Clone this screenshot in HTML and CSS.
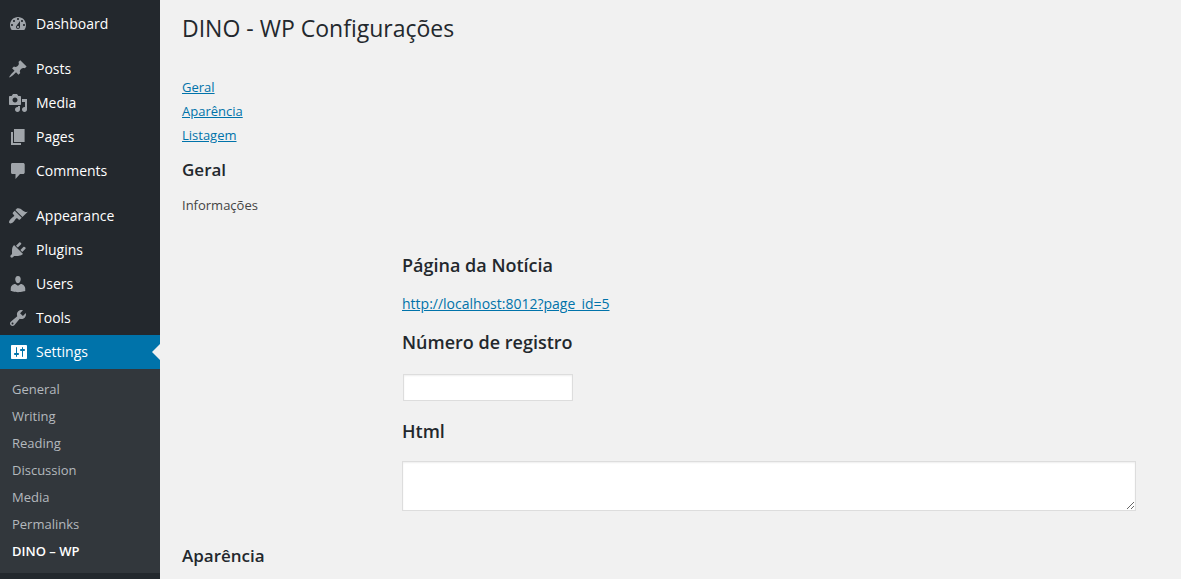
FILE: index.html
```html
<!DOCTYPE html>
<html lang="pt-BR">
<head>
<meta charset="utf-8">
<title>DINO - WP Configurações</title>
<link rel="stylesheet" href="styles.css">
</head>
<body>
<div class="layout">
  <nav class="sidebar" aria-label="Menu">
    <ul class="menu">
      <li><a class="menu-link" href="#"><svg class="icon" viewBox="0 0 20 20" aria-hidden="true"><path d="M3.76 16h12.48c1.1-1.37 1.76-3.11 1.76-5 0-4.42-3.58-8-8-8s-8 3.58-8 8c0 1.89.66 3.63 1.76 5zM10 4c.55 0 1 .45 1 1s-.45 1-1 1-1-.45-1-1 .45-1 1-1zM6 6c.55 0 1 .45 1 1s-.45 1-1 1-1-.45-1-1 .45-1 1-1zm8 0c.55 0 1 .45 1 1s-.45 1-1 1-1-.45-1-1 .45-1 1-1zm-5.37 5.55L12 7v6c0 1.1-.9 2-2 2s-2-.9-2-2c0-.57.24-1.08.63-1.45zM4 10c.55 0 1 .45 1 1s-.45 1-1 1-1-.45-1-1 .45-1 1-1zm12 0c.55 0 1 .45 1 1s-.45 1-1 1-1-.45-1-1 .45-1 1-1zm-5 3c0-.55-.45-1-1-1s-1 .45-1 1 .45 1 1 1 1-.45 1-1z"/></svg>Dashboard</a></li>
    </ul>
    <ul class="menu">
      <li><a class="menu-link" href="#"><svg class="icon" viewBox="0 0 20 20" aria-hidden="true"><path d="M10.44 3.02l1.82-1.82 6.36 6.35-1.83 1.82c-1.05-.68-2.48-.57-3.41.36l-.75.75c-.92.93-1.04 2.35-.35 3.41l-1.83 1.82-2.41-2.41-2.8 2.79c-.42.42-3.38 2.71-3.8 2.29s1.86-3.39 2.28-3.81l2.79-2.79L4.1 9.36l1.83-1.82c1.05.69 2.48.57 3.4-.36l.75-.75c.93-.92 1.05-2.35.36-3.41z"/></svg>Posts</a></li>
      <li><a class="menu-link" href="#"><svg class="icon" viewBox="0 0 20 20" aria-hidden="true"><path d="M13 11V4c0-.55-.45-1-1-1h-1.67L9 1H5L3.67 3H2c-.55 0-1 .45-1 1v7c0 .55.45 1 1 1h10c.55 0 1-.45 1-1zM7 4.5c1.38 0 2.5 1.12 2.5 2.5S8.38 9.5 7 9.5 4.5 8.38 4.5 7 5.62 4.5 7 4.5zM14 6h5v10.5c0 1.38-1.12 2.5-2.5 2.5S14 17.88 14 16.5s1.12-2.5 2.5-2.5c.17 0 .34.02.5.05V9h-3V6zm-4 8.05V13h2v3.5c0 1.38-1.12 2.5-2.5 2.5S7 17.88 7 16.5 8.12 14 9.5 14c.17 0 .34.02.5.05z"/></svg>Media</a></li>
      <li><a class="menu-link" href="#"><svg class="icon" viewBox="0 0 20 20" aria-hidden="true"><path d="M6 15V2h10.600v13H6zm-1 1h8v2H3V5h2v11z"/></svg>Pages</a></li>
      <li><a class="menu-link" href="#"><svg class="icon" viewBox="0 0 20 20" aria-hidden="true"><path d="M4.500 2h10.500c1 0 1.700.6 1.700 1.500v8c0 .9-.7 1.500-1.700 1.500h-3l-4.500 5v-5H4.500C3.500 13 3 12.400 3 11.500v-8C3 2.600 3.500 2 4.500 2z"/></svg>Comments</a></li>
    </ul>
    <ul class="menu">
      <li><a class="menu-link" href="#"><svg class="icon" viewBox="0 0 20 20" aria-hidden="true"><path d="M14.480 11.060L7.410 3.990l1.500-1.500c.5-.56 2.300-.47 3.510.32 1.210.8 1.430 1.280 2.910 2.100 1.180.64 2.450 1.260 4.450.85zm-.71.71L6.700 4.700 4.930 6.470c-.39.39-.39 1.020 0 1.410l1.060 1.060c.39.39.39 1.030 0 1.420-.6.6-1.430 1.110-2.210 1.690-.35.26-.7.53-1.010.84C1.430 14.230.4 16.080 1.400 17.070c.99 1 2.840-.03 4.180-1.360.31-.31.58-.66.85-1.020.57-.78 1.080-1.610 1.690-2.210.39-.39 1.020-.39 1.410 0l1.060 1.060c.39.39 1.020.39 1.410 0z"/></svg>Appearance</a></li>
      <li><a class="menu-link" href="#"><svg class="icon" viewBox="0 0 20 20" aria-hidden="true"><path d="M13.110 4.360L9.870 7.600 8 5.730l3.240-3.240c.35-.34 1.050-.2 1.560.32.52.51.66 1.210.31 1.550zm-8 1.770l.91-1.120 9.010 9.010-1.190.84c-.71.71-2.630 1.160-3.820 1.160H6.140L4.900 17.260c-.59.59-1.540.59-2.120 0-.59-.58-.59-1.530 0-2.120l1.240-1.240v-3.880c0-1.130.4-3.190 1.090-3.890zm7.260 3.970l3.240-3.240c.34-.35 1.040-.21 1.550.31.52.51.66 1.210.31 1.550l-3.240 3.250z"/></svg>Plugins</a></li>
      <li><a class="menu-link" href="#"><svg class="icon" viewBox="0 0 20 20" aria-hidden="true"><path d="M10 9.250c-2.270 0-2.730-3.440-2.730-3.440C7 4.020 7.820 2 9.970 2c2.160 0 2.980 2.020 2.710 3.810 0 0-.41 3.440-2.680 3.440zm0 2.570L12.720 10c2.390 0 4.520 2.330 4.520 4.530v2.490s-3.650 1.130-7.240 1.130c-3.650 0-7.240-1.130-7.240-1.130v-2.490c0-2.250 1.940-4.480 4.470-4.480z"/></svg>Users</a></li>
      <li><a class="menu-link" href="#"><svg class="icon" viewBox="0 0 20 20" aria-hidden="true"><path d="M16.680 9.770c-1.340 1.340-3.300 1.670-4.950.99l-5.410 6.520c-.99.99-2.590.99-3.580 0s-.99-2.590 0-3.570l6.520-5.420c-.68-1.650-.35-3.610.99-4.950 1.280-1.280 3.120-1.620 4.720-1.060l-2.890 2.890 2.820 2.820 2.860-2.870c.53 1.580.18 3.390-1.080 4.650zM3.810 16.210c.4.39 1.040.39 1.430 0 .4-.4.4-1.040 0-1.430-.39-.4-1.030-.4-1.430 0-.39.39-.39 1.030 0 1.430z"/></svg>Tools</a></li>
      <li>
        <a class="menu-link current" href="#"><svg class="icon" viewBox="-1 0 20 20" aria-hidden="true"><path d="M18 16V4c0-.55-.45-1-1-1H3c-.55 0-1 .45-1 1v12c0 .55.45 1 1 1h14c.55 0 1-.45 1-1zM8 11h1c.55 0 1 .45 1 1s-.45 1-1 1H8v1.500c0 .28-.22.5-.5.5s-.5-.22-.5-.5V13H6c-.55 0-1-.45-1-1s.45-1 1-1h1V5.500c0-.28.22-.5.5-.5s.5.22.5.5V11zm5-2h-1c-.55 0-1-.45-1-1s.45-1 1-1h1V5.500c0-.28.22-.5.5-.5s.5.22.5.5V7h1c.55 0 1 .45 1 1s-.45 1-1 1h-1v5.500c0 .28-.22.5-.5.5s-.5-.22-.5-.5V9z"/></svg>Settings</a>
        <ul class="submenu">
          <li><a href="#">General</a></li>
          <li><a href="#">Writing</a></li>
          <li><a href="#">Reading</a></li>
          <li><a href="#">Discussion</a></li>
          <li><a href="#">Media</a></li>
          <li><a href="#">Permalinks</a></li>
          <li><a class="active" href="#">DINO – WP</a></li>
        </ul>
      </li>
    </ul>
  </nav>
  <main class="content">
    <h1 class="page-title">DINO - WP Configurações</h1>
    <ul class="anchors">
      <li><a href="#geral">Geral</a></li>
      <li><a href="#aparencia">Aparência</a></li>
      <li><a href="#listagem">Listagem</a></li>
    </ul>
    <h2 class="section-title" id="geral">Geral</h2>
    <p class="description">Informações</p>
    <form class="fields">
      <h3 class="field-title">Página da Notícia</h3>
      <a class="page-link" href="#">http://localhost:8012?page_id=5</a>
      <h3 class="field-title"><label for="registro">Número de registro</label></h3>
      <input class="text-input" id="registro" type="text">
      <h3 class="field-title"><label for="html">Html</label></h3>
      <textarea class="text-area" id="html"></textarea>
    </form>
    <h2 class="section-title" id="aparencia">Aparência</h2>
  </main>
</div>
</body>
</html>
```
FILE: styles.css
```css
* { box-sizing: border-box; }

body {
  margin: 0;
  background: #f1f1f1;
  color: #444;
  font: 13px/18px "Open Sans", sans-serif;
}

ul { margin: 0; padding: 0; list-style: none; }
a { color: #0073aa; }

.layout { display: flex; min-height: 100vh; }

.sidebar {
  flex: 0 0 160px;
  display: flex;
  flex-direction: column;
  gap: 11px;
  padding-top: 7px;
  background: #23282d;
}

.menu-link {
  position: relative;
  display: flex;
  align-items: center;
  gap: 8px;
  height: 34px;
  padding: 0 8px;
  color: #fff;
  font-size: 14px;
  text-decoration: none;
}

.icon { width: 20px; height: 20px; fill: #a0a5aa; }

.current { background: #0073aa; }
.current .icon { fill: #fff; }
.current::after {
  content: "";
  position: absolute;
  right: 0;
  top: 9px;
  border: 8px solid transparent;
  border-left-width: 0;
  border-right-color: #f1f1f1;
}

.submenu { padding: 7px 0 8px; background: #32373c; }
.submenu a {
  display: block;
  padding: 0 12px;
  color: #b4b9be;
  line-height: 27px;
  text-decoration: none;
}
.submenu .active { color: #fff; font-weight: 600; }

.content { flex: 1; min-width: 0; padding: 14px 45px 12px 22px; }

.page-title {
  margin: 0 0 32px;
  color: #23282d;
  font-size: 23px;
  font-weight: 400;
  line-height: 29px;
}

.anchors { line-height: 24px; }

.section-title {
  margin: 11px 0 14px;
  color: #23282d;
  font-size: 17px;
  font-weight: 600;
  line-height: 24px;
}

.description { margin: 0; }

.fields {
  display: flex;
  flex-direction: column;
  align-items: flex-start;
  margin: 39px 0 33px;
  padding-left: 220px;
}

.field-title {
  margin: 0 0 16px;
  color: #23282d;
  font-size: 18px;
  font-weight: 600;
  line-height: 25px;
}

.page-link { margin-bottom: 16px; font-size: 14px; line-height: 20px; }

.text-input,
.text-area {
  border: 1px solid #ddd;
  background: #fff;
  box-shadow: inset 0 1px 2px rgba(0, 0, 0, 0.07);
  color: #32373c;
  font: inherit;
  font-size: 14px;
}

.text-input { width: 170px; height: 27px; margin: 3px 1px 18px; padding: 3px 5px; }
.text-area { display: block; width: 100%; height: 50px; margin-top: 1px; padding: 2px 6px; resize: vertical; }
```
